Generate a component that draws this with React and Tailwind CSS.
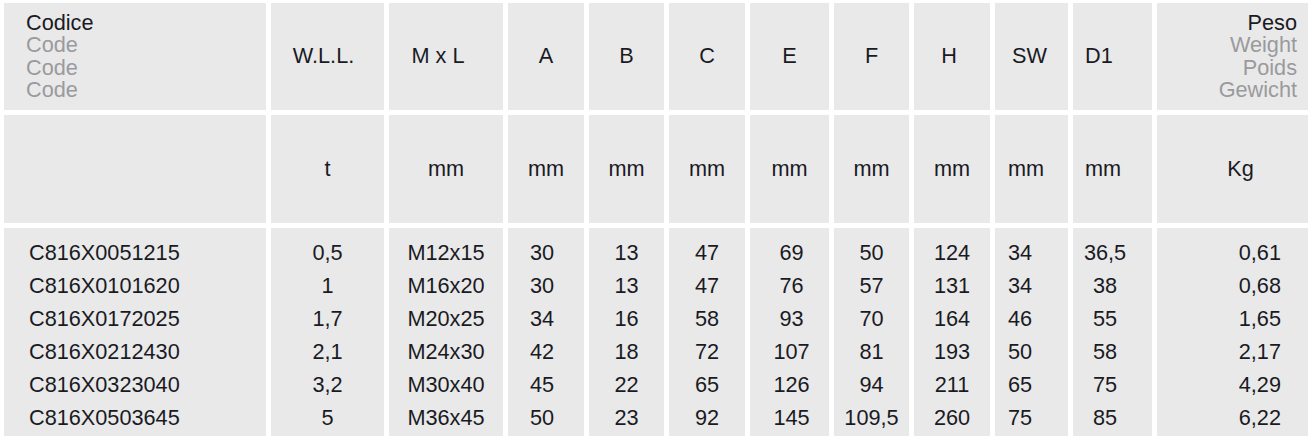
const columns = [
  { w: 'w-[262px]' },
  { w: 'w-[113px]' },
  { w: 'w-[114px]' },
  { w: 'w-[76px]' },
  { w: 'w-[75px]' },
  { w: 'w-[76px]' },
  { w: 'w-[79px]' },
  { w: 'w-[75px]' },
  { w: 'w-[76px]' },
  { w: 'w-[73px]' },
  { w: 'w-[79px]' },
  { w: 'w-[151px]' },
];

const rows = [
  ['C816X0051215', '0,5', 'M12x15', '30', '13', '47', '69', '50', '124', '34', '36,5', '0,61'],
  ['C816X0101620', '1', 'M16x20', '30', '13', '47', '76', '57', '131', '34', '38', '0,68'],
  ['C816X0172025', '1,7', 'M20x25', '34', '16', '58', '93', '70', '164', '46', '55', '1,65'],
  ['C816X0212430', '2,1', 'M24x30', '42', '18', '72', '107', '81', '193', '50', '58', '2,17'],
  ['C816X0323040', '3,2', 'M30x40', '45', '22', '65', '126', '94', '211', '65', '75', '4,29'],
  ['C816X0503645', '5', 'M36x45', '50', '23', '92', '145', '109,5', '260', '75', '85', '6,22'],
];

const units = ['', 't', 'mm', 'mm', 'mm', 'mm', 'mm', 'mm', 'mm', 'mm', 'mm', 'Kg'];
const heads = ['', 'W.L.L.', 'M x L', 'A', 'B', 'C', 'E', 'F', 'H', 'SW', 'D1', ''];

// alignment per column for header / units / data
const headAlign = [
  'justify-start pl-[22px]',
  'justify-center pr-[8px]',
  'justify-center pr-[16px]',
  'justify-center',
  'justify-center',
  'justify-center',
  'justify-center',
  'justify-center',
  'justify-center pr-[6px]',
  'justify-start pl-[17px]',
  'justify-start pl-[12px]',
  'justify-end pr-[11px]',
];

const unitAlign = [
  'justify-start',
  'justify-center',
  'justify-center',
  'justify-center',
  'justify-center',
  'justify-center',
  'justify-center',
  'justify-center',
  'justify-center',
  'justify-start pl-[13px]',
  'justify-start pl-[12px]',
  'justify-center pl-[16px]',
];

const dataAlign = [
  'text-left pl-[25px]',
  'text-center',
  'text-center',
  'text-center pr-[8px]',
  'text-center',
  'text-center',
  'text-center pl-[4px]',
  'text-center',
  'text-center',
  'text-left pl-[13px]',
  'text-center pr-[15px]',
  'text-right pr-[27px]',
];

function Cell({ className, children }) {
  return <div className={`bg-[#e9e9e9] ${className}`}>{children}</div>;
}

export default function App() {
  return (
    <div
      className="bg-white w-[1313px] h-[436px] overflow-hidden pl-[4px] pt-[3px] text-[#1a1a24] text-[21.7px]"
      style={{ fontFamily: '"Liberation Sans", Arial, sans-serif' }}
    >
      <div className="flex flex-col gap-[5px]">
        {/* header */}
        <div className="flex gap-[5px] h-[107px]">
          {columns.map((c, i) => (
            <Cell key={i} className={`${c.w} flex items-center ${headAlign[i]}`}>
              {i === 0 && (
                <div className="leading-[22.5px]">
                  <div>Codice</div>
                  <div className="text-[#9a9a9e]">Code</div>
                  <div className="text-[#9a9a9e]">Code</div>
                  <div className="text-[#9a9a9e]">Code</div>
                </div>
              )}
              {i === 11 && (
                <div className="leading-[22.5px] text-right">
                  <div>Peso</div>
                  <div className="text-[#9a9a9e]">Weight</div>
                  <div className="text-[#9a9a9e]">Poids</div>
                  <div className="text-[#9a9a9e]">Gewicht</div>
                </div>
              )}
              {i > 0 && i < 11 && <span>{heads[i]}</span>}
            </Cell>
          ))}
        </div>

        {/* units */}
        <div className="flex gap-[5px] h-[108px]">
          {columns.map((c, i) => (
            <Cell key={i} className={`${c.w} flex items-center ${unitAlign[i]}`}>
              <span>{units[i]}</span>
            </Cell>
          ))}
        </div>

        {/* data */}
        <div className="flex gap-[5px]">
          {columns.map((c, i) => (
            <Cell key={i} className={`${c.w} pt-[8px] pb-[10px] leading-[33px] ${dataAlign[i]}`}>
              {rows.map((r) => (
                <div key={r[0]}>{r[i]}</div>
              ))}
            </Cell>
          ))}
        </div>
      </div>
    </div>
  );
}
